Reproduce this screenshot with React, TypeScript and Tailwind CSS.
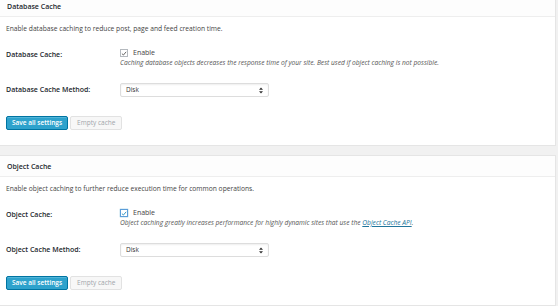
import React from 'react';

type Section = {
  title: string;
  intro: string;
  label: string;
  methodLabel: string;
  note: React.ReactNode;
  focused?: boolean;
};

const sections: Section[] = [
  {
    title: 'Database Cache',
    intro: 'Enable database caching to reduce post, page and feed creation time.',
    label: 'Database Cache:',
    methodLabel: 'Database Cache Method:',
    note: 'Caching database objects decreases the response time of your site. Best used if object caching is not possible.',
  },
  {
    title: 'Object Cache',
    intro: 'Enable object caching to further reduce execution time for common operations.',
    label: 'Object Cache:',
    methodLabel: 'Object Cache Method:',
    note: (
      <>
        Object caching greatly increases performance for highly dynamic sites that use the{' '}
        <a href="#" className="text-[#21759b] underline">
          Object Cache API
        </a>
        .
      </>
    ),
    focused: true,
  },
];

function Checkbox({ focused }: { focused?: boolean }) {
  return (
    <span
      className={
        focused
          ? 'flex h-[8px] w-[8px] items-center justify-center border border-[#5b9dd9] bg-white shadow-[0_0_1px_rgba(30,140,190,0.8)]'
          : 'flex h-[8px] w-[8px] items-center justify-center border border-[#b4b9be] bg-white'
      }
    >
      <svg width="7" height="7" viewBox="0 0 10 10">
        <path
          d="M1.5 5.2 L4 7.6 L8.6 2.2"
          fill="none"
          stroke={focused ? '#1e8cbe' : '#555'}
          strokeWidth="1.5"
        />
      </svg>
    </span>
  );
}

function Panel({ section, className }: { section: Section; className?: string }) {
  return (
    <div className={`border border-[#e5e5e5] bg-white ${className ?? ''}`}>
      <div className="flex h-[21px] items-center border-b border-[#eeeeee] bg-[#fdfdfd] px-[7px] pt-[2px]">
        <h3 className="text-[7px] font-semibold text-[#23282d]">{section.title}</h3>
      </div>
      <div className="px-[6px] pb-[15px]">
        <p className="pt-[7px] text-[6.7px] leading-[10px] text-[#444]">{section.intro}</p>

        <div className="mt-[14px] flex items-start">
          <div className="w-[114px] pt-[2px] text-[7px] font-semibold leading-[10px] text-[#23282d]">
            {section.label}
          </div>
          <div className="flex flex-col">
            <label className="flex h-[10px] items-center gap-[5px] text-[7px] text-[#444]">
              <Checkbox focused={section.focused} />
              Enable
            </label>
            <p className="text-[6.65px] italic leading-[10px] text-[#555]">{section.note}</p>
          </div>
        </div>

        <div className="mt-[15px] flex items-center">
          <div className="w-[114px] text-[7px] font-semibold leading-[10px] text-[#23282d]">
            {section.methodLabel}
          </div>
          <div className="flex h-[14px] w-[149px] items-center justify-between rounded-[2px] border border-[#dddddd] bg-white px-[5px] text-[6.5px] text-[#333] shadow-[inset_0_1px_2px_rgba(0,0,0,0.07)]">
            <span>Disk</span>
            <svg width="4" height="7" viewBox="0 0 4 7">
              <path d="M0 2.8 L2 0.4 L4 2.8 Z M0 4.2 L2 6.6 L4 4.2 Z" fill="#333" />
            </svg>
          </div>
        </div>

        <div className="mt-[19px] flex gap-[2px]">
          <button className="h-[14px] rounded-[2px] border border-[#0074a2] bg-[#2ea2cc] px-[5px] text-[6.5px] font-semibold leading-none text-white shadow-[inset_0_1px_0_rgba(120,200,230,0.5)]">
            Save all settings
          </button>
          <button className="h-[14px] rounded-[2px] border border-[#e2e2e2] bg-[#f7f7f7] px-[6px] text-[6.5px] leading-none text-[#a0a5aa]">
            Empty cache
          </button>
        </div>
      </div>
    </div>
  );
}

export default function App() {
  return (
    <div
      className="h-[306px] w-[558px] overflow-hidden bg-[#f1f1f1] pr-[2px]"
      style={{ fontFamily: '"Open Sans", "Liberation Sans", sans-serif' }}
    >
      <Panel section={sections[0]} className="-mt-[5px] -ml-px" />
      <Panel section={sections[1]} className="mt-[9px] -ml-px" />
    </div>
  );
}
